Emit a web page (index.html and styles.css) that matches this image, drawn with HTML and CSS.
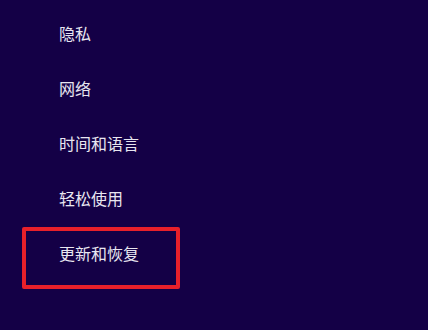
FILE: index.html
```html
<!DOCTYPE html>
<html lang="zh-CN">
<head>
<meta charset="utf-8">
<link rel="stylesheet" href="styles.css">
</head>
<body>
<ul class="menu">
  <li class="item">隐私</li>
  <li class="item">网络</li>
  <li class="item">时间和语言</li>
  <li class="item">轻松使用</li>
  <li class="item selected">更新和恢复</li>
</ul>
</body>
</html>
```
FILE: styles.css
```css
html, body {
  margin: 0;
  padding: 0;
  background: #140046;
  height: 100%;
}
body {
  font-family: "Noto Sans CJK SC", "Noto Sans", sans-serif;
  color: #e8e6f0;
  font-size: 16px;
}
.menu {
  list-style: none;
  margin: 0;
  padding: 6px 0 0 0;
}
.item {
  height: 55px;
  line-height: 55px;
  padding-left: 59px;
}
.item.selected {
  margin-top: 1px;
  margin-left: 22px;
  width: 117px;
  height: 44px;
  line-height: 44px;
  padding: 0 0 10px 33px;
  border: 4px solid #e8202a;
  border-radius: 2px;
}
```
